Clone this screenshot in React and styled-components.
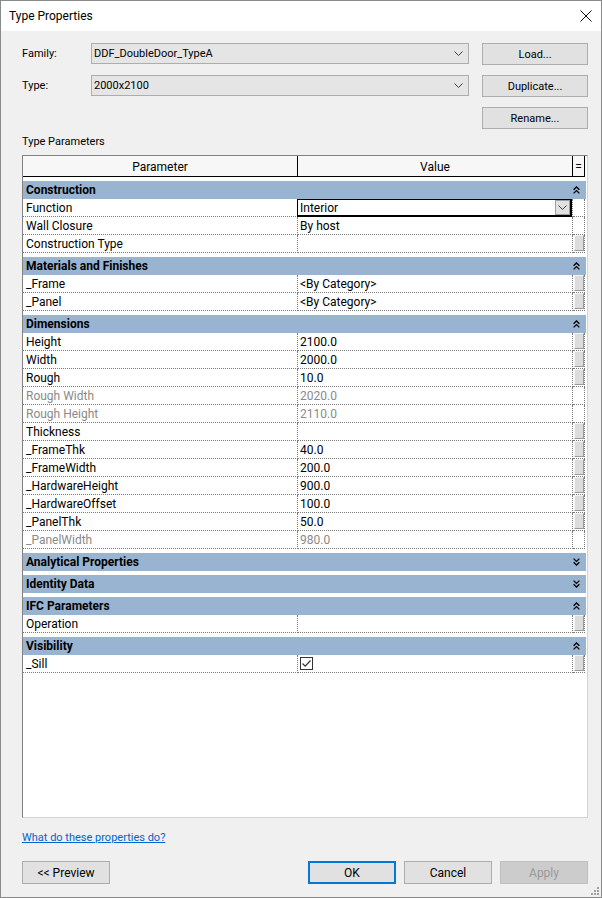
import React from 'react'
import styled, { createGlobalStyle } from 'styled-components'

const GlobalStyle = createGlobalStyle`
  html, body {
    margin: 0;
    padding: 0;
    background: #f0f0f0;
  }
  body {
    font-family: Roboto, "Noto Sans", sans-serif;
    font-size: 12px;
    color: #000;
  }
  * {
    box-sizing: border-box;
  }
`

const sections = [
  {
    title: 'Construction',
    open: true,
    rows: [
      { name: 'Function', value: 'Interior', combo: true },
      { name: 'Wall Closure', value: 'By host' },
      { name: 'Construction Type', value: '', thumb: true },
    ],
  },
  {
    title: 'Materials and Finishes',
    open: true,
    rows: [
      { name: '_Frame', value: '<By Category>', thumb: true },
      { name: '_Panel', value: '<By Category>', thumb: true },
    ],
  },
  {
    title: 'Dimensions',
    open: true,
    rows: [
      { name: 'Height', value: '2100.0', thumb: true },
      { name: 'Width', value: '2000.0', thumb: true },
      { name: 'Rough', value: '10.0', thumb: true },
      { name: 'Rough Width', value: '2020.0', disabled: true },
      { name: 'Rough Height', value: '2110.0', disabled: true },
      { name: 'Thickness', value: '', thumb: true },
      { name: '_FrameThk', value: '40.0', thumb: true },
      { name: '_FrameWidth', value: '200.0', thumb: true },
      { name: '_HardwareHeight', value: '900.0', thumb: true },
      { name: '_HardwareOffset', value: '100.0', thumb: true },
      { name: '_PanelThk', value: '50.0', thumb: true },
      { name: '_PanelWidth', value: '980.0', disabled: true },
    ],
  },
  { title: 'Analytical Properties', open: false, rows: [] },
  { title: 'Identity Data', open: false, rows: [] },
  {
    title: 'IFC Parameters',
    open: true,
    rows: [{ name: 'Operation', value: '', thumb: true }],
  },
  {
    title: 'Visibility',
    open: true,
    rows: [{ name: '_Sill', check: true, thumb: true }],
  },
]

const Window = styled.div`
  position: relative;
  width: 602px;
  height: 898px;
  border: 1px solid #8a8a8a;
  background: #f0f0f0;
  display: flex;
  flex-direction: column;
`

const TitleBar = styled.div`
  height: 30px;
  flex: none;
  background: #fff;
  display: flex;
  align-items: center;
  justify-content: space-between;
  padding: 0 9px 0 8px;
  font-size: 12px;
`

const Body = styled.div`
  flex: 1;
  display: flex;
  flex-direction: column;
  padding: 12px 13px 13px 21px;
  min-height: 0;
`

const FormGrid = styled.div`
  display: grid;
  grid-template-columns: 69px 391px 106px;
  grid-template-rows: 22px 22px 22px;
  row-gap: 10px;
  align-items: center;
  font-size: 11px;
`

const FieldLabel = styled.div`
  line-height: 16px;
`

const Combo = styled.div`
  height: 21px;
  margin-right: 13px;
  align-self: start;
  border: 1px solid #adadad;
  background: #e5e5e5;
  display: flex;
  align-items: center;
  justify-content: space-between;
  padding: 0 5px 0 2px;
`

const Button = styled.div`
  height: ${(p) => p.$h || 22}px;
  width: ${(p) => (p.$w ? p.$w + 'px' : 'auto')};
  background: ${(p) => (p.$disabled ? '#cccccc' : '#e1e1e1')};
  border: ${(p) => (p.$default ? '2px solid #0078d7' : p.$disabled ? '1px solid #bfbfbf' : '1px solid #adadad')};
  color: ${(p) => (p.$disabled ? '#9a9a9a' : '#000')};
  display: flex;
  align-items: center;
  justify-content: center;
`

const SectionLabel = styled.div`
  margin: 5px 0 5px 0;
  line-height: 16px;
  font-size: 11px;
`

const Table = styled.div`
  flex: 1;
  min-height: 0;
  background: #fff;
  border: 1px solid #828282;
  border-right-color: #d4d4d4;
  border-bottom-color: #d4d4d4;
  padding-right: 1px;
  overflow: hidden;
`

const HeaderRow = styled.div`
  display: grid;
  grid-template-columns: 275px 275px 12px;
  height: 21px;
  background: #f7f7f7;
`

const HeaderCell = styled.div`
  border-right: 1px solid #000;
  border-bottom: 1px solid #000;
  text-align: center;
  line-height: 22px;
  overflow: hidden;
`

const Section = styled.div`
  margin-top: 4px;
`

const SectionHeader = styled.div`
  display: grid;
  grid-template-columns: 550px 12px;
  height: 18px;
  background: #99b4d1;
  align-items: center;
`

const SectionTitle = styled.div`
  font-weight: 700;
  padding-left: 3px;
  line-height: 18px;
`

const ToggleIcon = styled.div`
  display: flex;
  align-items: center;
  justify-content: flex-start;
`

const Row = styled.div`
  display: grid;
  grid-template-columns: 275px 275px 12px;
  height: 18px;
`

const Cell = styled.div`
  position: relative;
  border-right: 1px dotted #7a7a7a;
  border-bottom: 1px dotted #7a7a7a;
  padding-left: ${(p) => p.$pad ?? 3}px;
  line-height: 19px;
  white-space: nowrap;
  overflow: ${(p) => (p.$visible ? 'visible' : 'hidden')};
  color: ${(p) => (p.$disabled ? '#8a8a8a' : '#000')};
`

const Thumb = styled.div`
  width: 10px;
  height: 16px;
  margin: 0 0 0 1px;
  background: #dcdcdc;
  border: 1px solid;
  border-color: #f4f4f4 #9a9a9a #9a9a9a #f4f4f4;
`

const CellCombo = styled.div`
  position: absolute;
  left: -1px;
  top: 0;
  right: 0;
  bottom: -1px;
  border: 1px solid #000;
  border-bottom-width: 2px;
  border-right-width: 2px;
  background: #fff;
  display: flex;
  align-items: center;
  justify-content: space-between;
  padding-left: 2px;
  line-height: 16px;
  z-index: 1;
`

const DropButton = styled.div`
  width: 15px;
  height: 15px;
  background: #e1e1e1;
  border: 1px solid #a0a0a0;
  display: flex;
  align-items: center;
  justify-content: center;
`

const CheckBox = styled.div`
  width: 13px;
  height: 13px;
  margin-top: 2px;
  border: 1px solid #333;
  background: #fff;
  display: flex;
  align-items: center;
  justify-content: center;
`

const HelpLink = styled.a`
  margin-top: 12px;
  line-height: 16px;
  font-size: 11px;
  color: #0066cc;
  text-decoration: underline;
  align-self: flex-start;
`

const ButtonBar = styled.div`
  margin-top: 15px;
  display: flex;
  gap: 8px;
`

const Spacer = styled.div`
  flex: 1;
`

const Grip = styled.svg`
  position: absolute;
  right: 2px;
  bottom: 2px;
`

const ChevronDown = ({ w = 9, h = 5 }) => (
  <svg width={w} height={h} viewBox="0 0 9 5">
    <polyline points="0.5,0.5 4.5,4.5 8.5,0.5" fill="none" stroke="#404040" strokeWidth="1" />
  </svg>
)

const Toggle = ({ open }) => (
  <svg width="7" height="8" viewBox="0 0 7 8">
    {open ? (
      <g fill="none" stroke="#000" strokeWidth="1.3">
        <polyline points="0.6,3.8 3.5,1 6.4,3.8" />
        <polyline points="0.6,7.4 3.5,4.6 6.4,7.4" />
      </g>
    ) : (
      <g fill="none" stroke="#000" strokeWidth="1.3">
        <polyline points="0.6,0.6 3.5,3.4 6.4,0.6" />
        <polyline points="0.6,4.2 3.5,7 6.4,4.2" />
      </g>
    )}
  </svg>
)

const ParamRow = ({ row }) => (
  <Row>
    <Cell $disabled={row.disabled}>{row.name}</Cell>
    <Cell $pad={2} $disabled={row.disabled} $visible={row.combo}>
      {row.combo ? (
        <CellCombo>
          <span>{row.value}</span>
          <DropButton>
            <ChevronDown w={9} h={5} />
          </DropButton>
        </CellCombo>
      ) : row.check ? (
        <CheckBox>
          <svg width="11" height="11" viewBox="0 0 11 11">
            <polyline points="1.5,5.5 4.2,8.2 9.5,2.5" fill="none" stroke="#333" strokeWidth="1.2" />
          </svg>
        </CheckBox>
      ) : (
        row.value
      )}
    </Cell>
    <Cell $pad={0}>{row.thumb && <Thumb />}</Cell>
  </Row>
)

export default function App() {
  return (
    <>
      <GlobalStyle />
      <Window>
        <TitleBar>
          <span>Type Properties</span>
          <svg width="12" height="12" viewBox="0 0 12 12">
            <path d="M0.5 0.5 L11.5 11.5 M11.5 0.5 L0.5 11.5" stroke="#111" strokeWidth="1" />
          </svg>
        </TitleBar>
        <Body>
          <FormGrid>
            <FieldLabel>Family:</FieldLabel>
            <Combo>
              <span>DDF_DoubleDoor_TypeA</span>
              <ChevronDown />
            </Combo>
            <Button>Load...</Button>
            <FieldLabel>Type:</FieldLabel>
            <Combo>
              <span>2000x2100</span>
              <ChevronDown />
            </Combo>
            <Button>Duplicate...</Button>
            <div />
            <div />
            <Button>Rename...</Button>
          </FormGrid>
          <SectionLabel>Type Parameters</SectionLabel>
          <Table>
            <HeaderRow>
              <HeaderCell>Parameter</HeaderCell>
              <HeaderCell>Value</HeaderCell>
              <HeaderCell>=</HeaderCell>
            </HeaderRow>
            {sections.map((s) => (
              <Section key={s.title}>
                <SectionHeader>
                  <SectionTitle>{s.title}</SectionTitle>
                  <ToggleIcon>
                    <Toggle open={s.open} />
                  </ToggleIcon>
                </SectionHeader>
                {s.rows.map((r) => (
                  <ParamRow key={r.name} row={r} />
                ))}
              </Section>
            ))}
          </Table>
          <HelpLink href="#">What do these properties do?</HelpLink>
          <ButtonBar>
            <Button $w={88} $h={23}>&lt;&lt; Preview</Button>
            <Spacer />
            <Button $w={88} $h={23} $default>OK</Button>
            <Button $w={88} $h={23}>Cancel</Button>
            <Button $w={88} $h={23} $disabled>Apply</Button>
          </ButtonBar>
        </Body>
        <Grip width="8" height="8" viewBox="0 0 8 8">
          <g fill="#a0a0a0">
            <rect x="6" y="0" width="2" height="2" />
            <rect x="3" y="3" width="2" height="2" />
            <rect x="6" y="3" width="2" height="2" />
            <rect x="0" y="6" width="2" height="2" />
            <rect x="3" y="6" width="2" height="2" />
            <rect x="6" y="6" width="2" height="2" />
          </g>
        </Grip>
      </Window>
    </>
  )
}
